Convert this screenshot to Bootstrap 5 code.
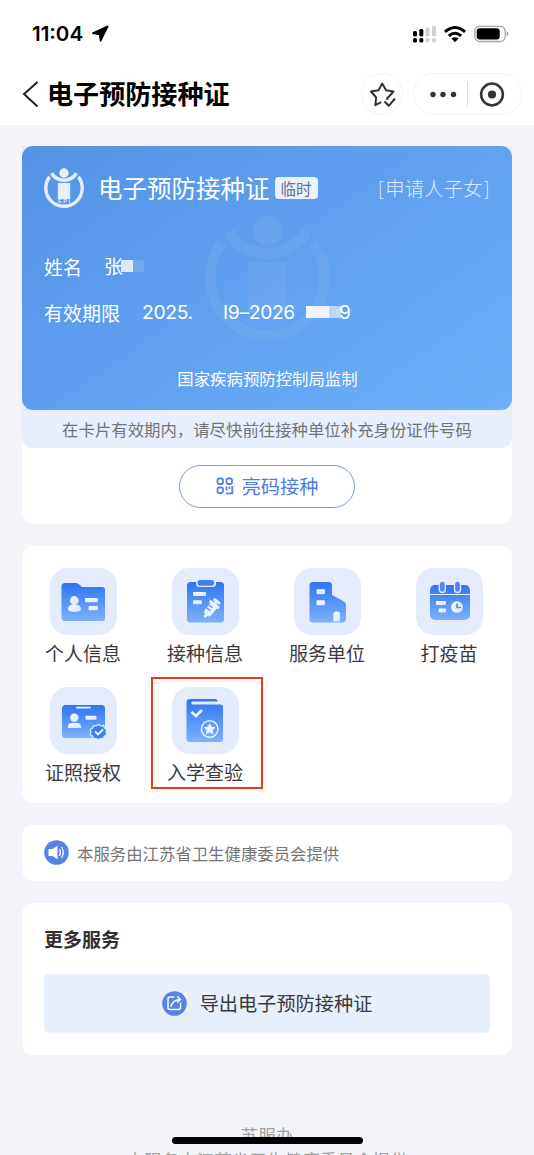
<!DOCTYPE html>
<html lang="zh-CN">
<head>
<meta charset="utf-8">
<meta name="viewport" content="width=device-width, initial-scale=1">
<title>电子预防接种证</title>
<link href="https://cdn.jsdelivr.net/npm/bootstrap@5.3.0/dist/css/bootstrap.min.css" rel="stylesheet">
<style>
body{font-family:"Noto Sans CJK SC",sans-serif;background:#f4f5fa;color:#3a3a3c;height:1155px;overflow:hidden;line-height:1;font-size:19px}
svg{display:block;flex:none}
.status-bar{height:68px;padding:0 25px 0 32px}
.clock{font:600 20.5px/1 Inter,sans-serif;color:#000;letter-spacing:0}
.title-bar{height:57px;padding:0 12px 5px 22px}
.page-title{font-size:26.1px;font-weight:700;color:#000;margin:0 0 1px 8px;line-height:1}
.round-btn{width:42px;height:42px;border:1px solid #f3f3f5}
.capsule{width:109px;height:42px;border:1px solid #f3f3f5;border-radius:21px;margin-left:10px}
.capsule-line{width:1px;height:25px;background:#dedee0}
main{padding:21.400px 22px 0}
.panel{background:#fff;border-radius:11px}
.pass-panel{height:377.600px;margin-bottom:22px}
.notice{background:#e7effd;border-radius:0 0 11px 11px;height:302px}
.pass{height:263.600px;border-radius:11px;color:#fff;background:linear-gradient(145deg,#5293e6 0%,#5e9fef 45%,#6bb0f9 100%);padding:0 21px 0 22px}
.pass-head{height:84px}
.pass-title{font-size:24.5px;margin-left:14px}
.temp-tag{width:43px;height:22px;border-radius:4px;background:#e9f1fa;color:#627594;font-size:15.5px;margin-left:5px}
.child-tag{font-size:19.2px;color:#dfeafa;font-weight:300;letter-spacing:.3px}
.child-tag i{font-style:normal;padding:0 1px}
.watermark{left:181px;top:69px}
.field{height:46px}
.num{font:400 19.3px/22px Inter,"Liberation Sans",sans-serif;white-space:nowrap;letter-spacing:-.35px}
.cover{overflow:hidden}
.mask{height:12px}
.issuer{font-size:16.4px;padding-top:35px}
.notice-text{height:38px;font-size:16.4px;color:#747474}
.code-btn{width:176px;height:43px;border:1px solid #7899e9;border-radius:22px;color:#4c7ce0;font-size:19.2px;margin:16.5px auto 0}
.services{height:257px;padding-top:22px;margin-bottom:22px}
.tile{width:122px;height:119px}
.tile-icon{width:67px;height:67px;border-radius:18px;background:#e4ecfc}
.tile-label{line-height:35px}
.picked{left:129px;top:131px;width:112px;height:112px;border:2px solid #f0391c}
.provider{height:56px;padding-left:22px;font-size:16.4px;color:#757575;margin-bottom:22.5px}
.more{height:152px;padding:26px 22px 0}
.more h2{font-size:19px;font-weight:700;color:#303033;line-height:20px;margin-bottom:25px}
.export{height:59px;border-radius:5px;background:#e7effd;color:#3a3a3c;gap:13px;font-size:19.200px}
footer{color:#a0a0a3;font-size:17.600px;padding-top:67px;line-height:25px}
.home-bar{left:172px;top:1137px;width:190.500px;height:7px;border-radius:4px;background:#000}
</style>
</head>
<body class="position-relative">
<svg width="0" height="0" class="position-absolute" aria-hidden="true">
<defs>
<linearGradient id="b" x1="0" y1="0" x2="0" y2="1"><stop offset="0" stop-color="#2f75f2"/><stop offset="1" stop-color="#7db1fb"/></linearGradient>
<linearGradient id="w" x1="0" y1="0" x2="1" y2="1"><stop offset="0" stop-color="#fff"/><stop offset="1" stop-color="#cfe5fd"/></linearGradient>
<symbol id="epi" viewBox="0 0 40 41">
<circle cx="20" cy="5" r="4.700"/>
<path d="M7.600 5.300Q12 12.200 20 12.200T32.400 5.300" fill="none" stroke="currentColor" stroke-width="3.600"/>
<path d="M5.600 8.900A18.200 18.200 0 1 0 34.400 8.900" fill="none" stroke="currentColor" stroke-width="3.400"/>
<path d="M13.800 15h12.400V31H13.800z"/>
</symbol>
</defs>
</svg>
<header class="bg-white">
  <div class="status-bar d-flex align-items-center">
    <span class="clock">11:04</span>
    <svg style="margin-left:8px" width="19" height="18" viewBox="0 0 19 18"><path d="M16.800 1.300 1.700 8.300 8.500 9.400 9.600 15.900z" fill="#000" stroke="#000" stroke-width="1.500" stroke-linejoin="round"/></svg>
    <div class="d-flex align-items-center ms-auto">
      <svg width="25" height="18" viewBox="0 0 25 18"><g fill="#000"><rect x="1" y="6" width="4" height="5.500" rx="1.500"/><rect x="7.300" y="4" width="4" height="7.500" rx="1.500"/><rect x="1" y="13" width="4" height="4.500" rx="1.500"/><rect x="7.300" y="13" width="4" height="4.500" rx="1.500"/></g><g fill="#cfcfcf"><rect x="13.600" y="2.500" width="4" height="9" rx="1.500"/><rect x="20" y="1" width="4" height="10.500" rx="1.500"/><rect x="13.600" y="13" width="4" height="4.500" rx="1.500"/><rect x="20" y="13" width="4" height="4.500" rx="1.500"/></g></svg>
      <svg style="margin-left:7px" width="22" height="17" viewBox="0 0 22 17"><g fill="none" stroke="#000" stroke-width="3"><path d="M1 5.900Q11-2.800 21 5.900"/><path d="M4.800 9.900Q11 4.700 17.200 9.900"/></g><path d="M7.500 12.600Q11 9.800 14.500 12.600L11 16.300z"/></svg>
      <svg style="margin-left:8px" width="35" height="18" viewBox="0 0 35 18"><rect x=".8" y="1.300" width="30.400" height="15.200" rx="4.800" fill="none" stroke="#a5a5a5" stroke-width="1.300"/><rect x="2.700" y="3.200" width="23" height="11.400" rx="3"/><path d="M32.700 6.300q1.600.8 1.600 2.500t-1.600 2.500z" fill="#999"/></svg>
    </div>
  </div>
  <div class="title-bar d-flex align-items-center">
    <svg width="17" height="28" viewBox="0 0 17 28"><path d="M15.500 2 2 14l13.500 12.500" fill="none" stroke="#222" stroke-width="2"/></svg>
    <h1 class="page-title">电子预防接种证</h1>
    <div class="round-btn rounded-circle d-flex align-items-center justify-content-center ms-auto">
      <svg width="27" height="27" viewBox="0 0 27 27" fill="none" stroke="#333" stroke-width="2" stroke-linejoin="round"><path d="M12.200 21.200 6.300 24.100 7.200 16.500 2 10.500 9.500 9.200 13.200 2.500 17 9.200 24.500 10.500 20 15.500 18.200 17.300V19"/><path d="m15.500 20.500 4.300 4.300L26 17.500"/></svg>
    </div>
    <div class="capsule d-flex align-items-center">
      <svg width="53" height="40" viewBox="0 0 53 40" fill="#333"><circle cx="19" cy="20.500" r="2.700"/><circle cx="29" cy="20.500" r="2.700"/><circle cx="39.500" cy="20.500" r="2.700"/></svg>
      <span class="capsule-line"></span>
      <svg width="49" height="40" viewBox="0 0 49 40"><circle cx="24" cy="20.500" r="10.900" fill="none" stroke="#333" stroke-width="2.500"/><circle cx="24" cy="20.500" r="4.100" fill="#333"/></svg>
    </div>
  </div>
</header>
<main>
  <section class="panel pass-panel">
    <div class="notice">
      <div class="pass position-relative">
        <svg class="watermark position-absolute" width="129" height="129" fill="#81b4ed" color="#81b4ed" opacity=".3"><use href="#epi"/></svg>
        <div class="pass-head d-flex align-items-center position-relative">
          <svg width="40" height="41" viewBox="0 0 40 41" fill="#e6efff" color="#e6efff"><use href="#epi"/><text x="20" y="35.400" font-size="5.800" font-weight="700" text-anchor="middle" textLength="12" font-family="Liberation Sans" fill="#d5e5ff">EPI</text></svg>
          <span class="pass-title">电子预防接种证</span>
          <span class="temp-tag d-flex align-items-center justify-content-center">临时</span>
          <span class="child-tag ms-auto"><i>[</i>申请人子女<i>]</i></span>
        </div>
        <div style="padding-top:13px" class="position-relative">
          <div class="field d-flex align-items-center"><span>姓名</span><span style="margin-left:22px;width:19px;line-height:24px">张</span><span class="mask position-relative" style="width:12px;margin-left:-2px;background:#dceafa"></span><span class="mask" style="width:11px;background:#6fa8ed"></span></div>
          <div class="field d-flex align-items-center"><span>有效期限</span><span class="num" style="margin-left:22px;width:57px">2025.</span><span class="num cover" style="margin-left:24px;width:71px">I9–2026</span><span class="mask" style="width:23px;margin-left:12px;background:#edf4fd"></span><span class="mask" style="width:12px;background:#bdd9f8"></span><span class="num" style="margin-left:-2px">9</span></div>
          <div class="issuer text-center">国家疾病预防控制局监制</div>
        </div>
      </div>
      <div class="notice-text d-flex align-items-center justify-content-center">在卡片有效期内，请尽快前往接种单位补充身份证件号码</div>
    </div>
    <div class="code-btn d-flex align-items-center justify-content-center gap-2">
      <svg width="18" height="18" viewBox="0 0 18 18" fill="none" stroke="#5783e1" stroke-width="1.800"><rect x="1.500" y="1.500" width="5.500" height="5.500" rx="1.500"/><rect x="10.500" y="1.500" width="5.500" height="5.500" rx="1.500"/><rect x="1.500" y="10.500" width="5.500" height="5.500" rx="1.500"/><path d="M10.500 9.500v4M13.500 9.500V12M16.300 9v7.300H10"/></svg>
      <span>亮码接种</span>
    </div>
  </section>

  <section class="panel services position-relative">
    <div class="d-flex flex-wrap">
      <div class="tile d-flex flex-column align-items-center">
        <div class="tile-icon"><svg width="67" height="67"><path d="M15 15h11q2 0 3.500 1.700L32 19h20q3 0 3 3v28q0 3-3 3H15q-3.500 0-3.500-3V18.500q0-3.500 3.500-3.500z" fill="url(#b)"/><g fill="url(#w)"><circle cx="24.300" cy="32.500" r="4.400"/><path d="M18 41q0-4 5-4.500h3q5 .5 5 4.500 0 3-6.500 3T18 41z"/><rect x="35" y="30" width="13" height="4.300" rx="1"/><rect x="38.500" y="38" width="9.500" height="4.300" rx="1"/></g></svg></div>
        <span class="tile-label">个人信息</span>
      </div>
      <div class="tile d-flex flex-column align-items-center">
        <div class="tile-icon"><svg width="67" height="67"><rect x="15" y="14" width="37" height="40.500" rx="3.500" fill="url(#b)"/><path d="M24 14h20v1.500q0 3.500-3.500 3.500h-13Q24 19 24 15.500z" fill="#e4ecfc"/><rect x="25.500" y="12" width="16.500" height="5.700" rx="2.500" fill="#3d7ff4"/><g fill="url(#w)"><rect x="21" y="24" width="13" height="4" rx="1"/><rect x="21" y="32.300" width="9" height="4" rx="1"/></g><g transform="translate(39.300 40.500) rotate(38)" fill="#e3f2ff"><path d="M-4.300-5h8.600V5q0 2.500-2 3H1.500v3h-3V8h-.8q-2-.5-2-3zM-6-6.500h12v3H-6zM-1.500-9.500h3v4h-3zM-4-10.500h8v2.800h-8z"/><path d="M-4.500-1.300H.5M-4.500 2.300H.5" stroke="#5a98f7" stroke-width="1.300"/></g></svg></div>
        <span class="tile-label">接种信息</span>
      </div>
      <div class="tile d-flex flex-column align-items-center">
        <div class="tile-icon"><svg width="67" height="67"><path d="M19 14h15.500q3.500 0 3.500 3.500V27l12 6.500q2 1.200 2 3.500v14q0 3.500-3.500 3.500H19q-3.500 0-3.500-3.500V17.500Q15.500 14 19 14z" fill="url(#b)"/><g fill="url(#w)"><rect x="22.500" y="21.300" width="8.500" height="5" rx="1"/><rect x="22.500" y="32.300" width="8.500" height="5" rx="1"/><path d="M39.500 53.500V46q0-2.500 3.300-2.500T46 46v7.500z"/></g></svg></div>
        <span class="tile-label">服务单位</span>
      </div>
      <div class="tile d-flex flex-column align-items-center">
        <div class="tile-icon"><svg width="67" height="67"><rect x="14" y="17" width="40" height="35" rx="5" fill="url(#b)"/><path d="M14 26.500h40" stroke="#e4ecfc" stroke-width="1.200"/><g fill="#4a89f5" stroke="#e4ecfc" stroke-width="1.300"><rect x="23.300" y="13" width="6" height="11.500" rx="3"/><rect x="38.500" y="13" width="6" height="11.500" rx="3"/></g><g fill="url(#w)"><rect x="20" y="33" width="10" height="4" rx="1"/><rect x="22.700" y="40.500" width="7.300" height="4" rx="1"/><circle cx="41" cy="39.200" r="5.900"/></g><path d="M41 35.500V39.500h4" fill="none" stroke="#4b8bf5" stroke-width="1.600"/></svg></div>
        <span class="tile-label">打疫苗</span>
      </div>
      <div class="tile d-flex flex-column align-items-center">
        <div class="tile-icon"><svg width="67" height="67"><rect x="12" y="18" width="43" height="33" rx="3.500" fill="url(#b)"/><g fill="url(#w)"><rect x="26" y="19.800" width="15" height="1.700" rx=".8"/><circle cx="24.300" cy="30.700" r="4.200"/><path d="M18 41v-1q0-4 4-4h5q4 0 4 4v1z"/><rect x="35.500" y="28.800" width="11" height="4" rx="1"/></g><path d="m48.500 37.500 2.300 1.400 2.700-.4 1 2.500 2.300 1.500-.8 2.600.8 2.600-2.400 1.500-1.100 2.400-2.700-.3-2.200 1.500-2.200-1.500-2.700.3-1-2.500-2.300-1.500.7-2.500-.7-2.600 2.300-1.500 1-2.400 2.700.3z" fill="#3c80ef" stroke="#d7e8ff" stroke-width="1.300"/><path d="m45 44.500 3 3 5-5" fill="none" stroke="#eaf4ff" stroke-width="1.800"/></svg></div>
        <span class="tile-label">证照授权</span>
      </div>
      <div class="tile d-flex flex-column align-items-center">
        <div class="tile-icon"><svg width="67" height="67"><path d="M18 12h25q2.500 0 2.500 2.500H21q-1.800 0-1.800 1.500T21 17.500h27.500q2.500 0 2.500 2.500v32q0 3-3 3H17.500q-3 0-3-3V15.500Q14.500 12 18 12z" fill="url(#b)"/><path d="m19.500 25 4.500 4 6-6" fill="none" stroke="#edf6ff" stroke-width="2.500"/><circle cx="37.700" cy="42" r="8.300" fill="none" stroke="#e3f0ff" stroke-width="1.500"/><path d="m37.700 36.700 1.700 3.300 3.600.5-2.600 2.600.6 3.700-3.300-1.700-3.300 1.700.6-3.700-2.600-2.600 3.600-.5z" fill="#edf6ff" stroke="#edf6ff" stroke-width=".8" stroke-linejoin="round"/></svg></div>
        <span class="tile-label">入学查验</span>
      </div>
    </div>
    <div class="picked position-absolute"></div>
  </section>

  <section class="panel provider d-flex align-items-center">
    <svg width="25" height="25" viewBox="0 0 25 25"><circle cx="12.500" cy="12.500" r="12.300" fill="#5783e1"/><path d="M4.500 9h4l5-3.300v13.600l-5-3.300h-4z" fill="#fff"/><path d="M15.500 9q2 3.500 0 7M17.500 7q3.500 5.500 0 11" fill="none" stroke="#fff" stroke-width="1.200"/></svg>
    <span style="margin-left:8px">本服务由江苏省卫生健康委员会提供</span>
  </section>

  <section class="panel more">
    <h2>更多服务</h2>
    <div class="export d-flex align-items-center justify-content-center">
      <svg width="25" height="25" viewBox="0 0 25 25"><circle cx="12.500" cy="12.500" r="12.300" fill="#5783e1"/><g fill="none" stroke="#fff" stroke-width="1.500" stroke-linejoin="round"><path d="M12.500 6H8Q6 6 6 8v8.500q0 2 2 2h8.500q2 0 2-2v-5"/><path d="M9 15.500Q10.500 9 18 8.500M15.200 5.500 18.500 8.500 15.200 11.500"/></g></svg>
      <span>导出电子预防接种证</span>
    </div>
  </section>
</main>
<footer class="text-center"><div>苏服办</div><div>本服务由江苏省卫生健康委员会提供</div></footer>
<div class="home-bar position-absolute"></div>
<script src="https://cdn.jsdelivr.net/npm/bootstrap@5.3.0/dist/js/bootstrap.bundle.min.js"></script>
</body>
</html>
